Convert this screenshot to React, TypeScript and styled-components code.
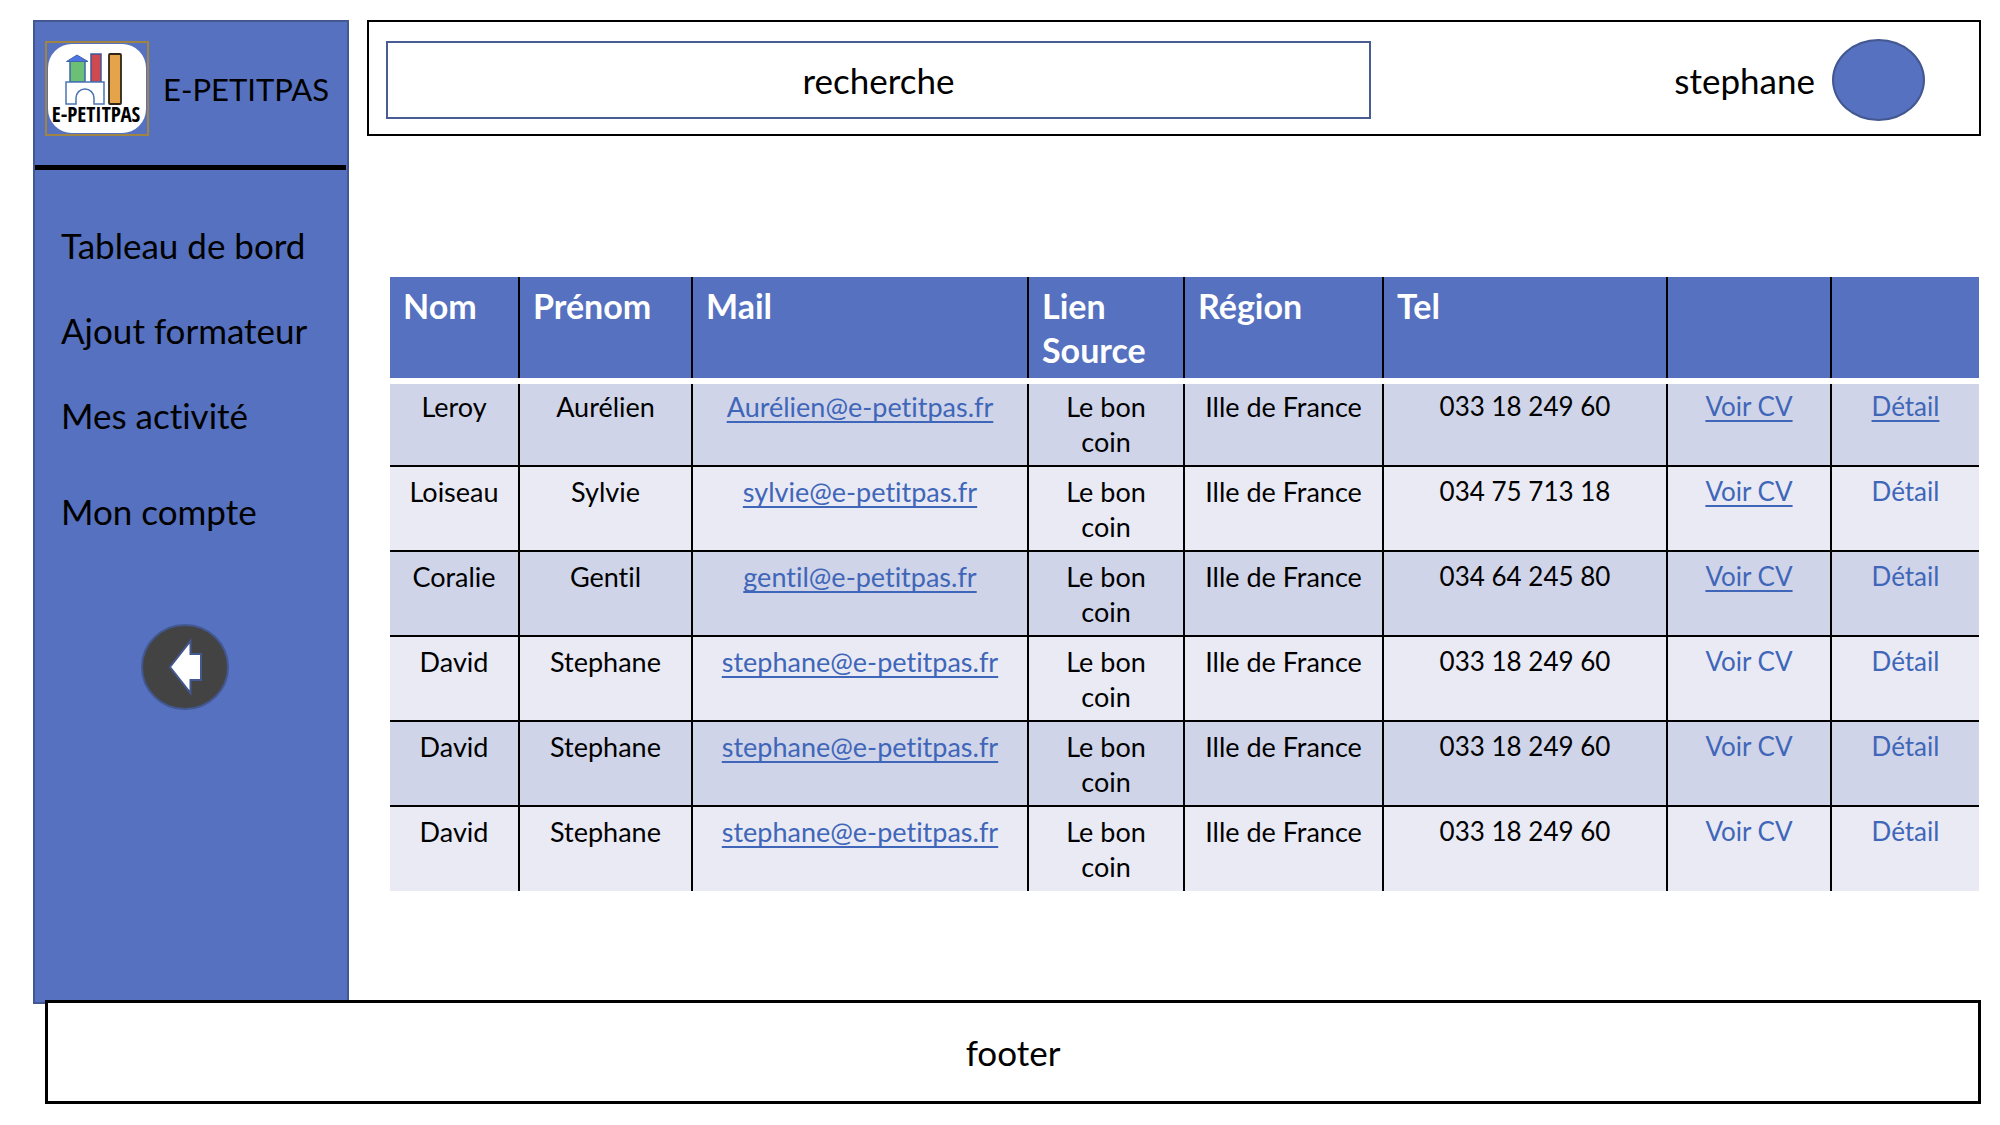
import React from "react";
import styled, { createGlobalStyle } from "styled-components";

const color = {
  blue: "#5571bf",
  outline: "#435790",
  searchLine: "#4a5c94",
  link: "#3f66b8",
  rowDark: "#cfd4e8",
  rowLight: "#e9eaf4",
};

const GlobalStyle = createGlobalStyle`
  *, *::before, *::after { box-sizing: border-box; }
  body {
    margin: 0;
    background: #fff;
    color: #000;
    font-family: Lato, Carlito, "Open Sans", sans-serif;
    font-size: 35px;
    font-variant-ligatures: none;
    line-height: 40px;
  }
`;

const Page = styled.div`
  display: flex;
  flex-direction: column;
  min-height: 100vh;
  padding: 20px 19px 21px 33px;
`;

const Body = styled.div`
  flex: 1;
  display: grid;
  grid-template-columns: 316px minmax(0, 1fr);
  gap: 18px;
`;

const Sidebar = styled.aside`
  background: ${color.blue};
  border: 2px solid ${color.outline};
`;

const Brand = styled.div`
  display: flex;
  align-items: center;
  gap: 14px;
  height: 148px;
  margin-right: 1px;
  padding: 0 0 10px 10px;
  border-bottom: 5px solid #000;
`;

const BrandName = styled.span`
  font-size: 31px;
`;

const Logo = styled.svg`
  flex: none;
  width: 104px;
  height: 95px;
`;

const Nav = styled.nav`
  display: flex;
  flex-direction: column;
  gap: 56px;
  padding: 55px 0 0 26px;
`;

const NavList = styled.ul`
  display: flex;
  flex-direction: column;
  gap: 45px;
  margin: 0;
  padding: 0;
  list-style: none;
`;

const NavLink = styled.a`
  color: inherit;
  text-decoration: none;
`;

const BackButton = styled.button`
  display: block;
  margin: 93px 0 0 106px;
  padding: 0;
  border: 0;
  background: none;
  cursor: pointer;

  svg {
    display: block;
    width: 88px;
    height: 86px;
  }
`;

const Main = styled.main`
  display: flex;
  flex-direction: column;
  gap: 141px;
`;

const TopBar = styled.header`
  display: grid;
  grid-template-columns: 16fr 9fr;
  align-items: center;
  padding: 17px 54px 13px 17px;
  border: 2px solid #000;
`;

const SearchBox = styled.input`
  width: 100%;
  height: 78px;
  border: 2px solid ${color.searchLine};
  border-radius: 0;
  background: #fff;
  font: inherit;
  text-align: center;

  &::placeholder {
    color: #000;
    opacity: 1;
  }
`;

const User = styled.div`
  display: flex;
  align-items: center;
  justify-content: flex-end;
  gap: 17px;
`;

const Avatar = styled.span`
  width: 93px;
  height: 82px;
  border: 2px solid ${color.outline};
  border-radius: 50%;
  background: ${color.blue};
`;

const TableArea = styled.div`
  padding: 0 2px 0 23px;
`;

const Table = styled.table`
  width: 100%;
  table-layout: fixed;
  border-collapse: collapse;
`;

const Column = styled.col<{ $width: number }>`
  width: ${(p) => p.$width}px;
`;

const HeadCell = styled.th`
  height: 104px;
  padding: 7px 13px 2px;
  border-bottom: 6px solid #fff;
  background: ${color.blue};
  color: #fff;
  font-size: 34px;
  font-weight: 700;
  line-height: 44px;
  text-align: left;
  vertical-align: top;

  & + & {
    border-left: 2px solid #000;
  }
`;

const Cell = styled.td<{ $compact?: boolean }>`
  padding: 7px 10px 0;
  font-size: ${(p) => (p.$compact ? 26 : 27)}px;
  line-height: 35px;
  text-align: center;
  vertical-align: top;

  & + & {
    border-left: 2px solid #000;
  }
`;

const Row = styled.tr`
  height: 85px;
  background: ${color.rowLight};

  &:nth-child(odd) {
    background: ${color.rowDark};
  }

  &:first-child ${Cell} {
    padding-top: 5px;
  }

  & + & {
    border-top: 2px solid #000;
  }
`;

const CellLink = styled.a<{ $plain?: boolean }>`
  color: ${color.link};
  text-decoration: ${(p) => (p.$plain ? "none" : "underline")};
  text-decoration-thickness: 2px;
  text-decoration-skip-ink: none;
  text-underline-offset: 4px;
  white-space: nowrap;
`;

const Footer = styled.footer`
  z-index: 1;
  display: flex;
  align-items: center;
  justify-content: center;
  height: 104px;
  margin: -4px 0 0 12px;
  border: 3px solid #000;
  background: #fff;
`;

const columns = [
  { label: "Nom", width: 129 },
  { label: "Prénom", width: 173 },
  { label: "Mail", width: 336 },
  { label: "Lien Source", width: 156 },
  { label: "Région", width: 199 },
  { label: "Tel", width: 284 },
  { label: "", width: 164 },
  { label: "", width: 148 },
];

interface Trainer {
  nom: string;
  prenom: string;
  mail: string;
  tel: string;
  cvLinked?: boolean;
  detailLinked?: boolean;
}

const david: Trainer = {
  nom: "David",
  prenom: "Stephane",
  mail: "stephane@e-petitpas.fr",
  tel: "033 18 249 60",
};

const trainers: Trainer[] = [
  { nom: "Leroy", prenom: "Aurélien", mail: "Aurélien@e-petitpas.fr", tel: "033 18 249 60", cvLinked: true, detailLinked: true },
  { nom: "Loiseau", prenom: "Sylvie", mail: "sylvie@e-petitpas.fr", tel: "034 75 713 18", cvLinked: true },
  { nom: "Coralie", prenom: "Gentil", mail: "gentil@e-petitpas.fr", tel: "034 64 245 80", cvLinked: true },
  david,
  david,
  david,
];

const navGroups = [["Tableau de bord", "Ajout formateur", "Mes activité"], ["Mon compte"]];

function BrandLogo() {
  return (
    <Logo viewBox="0 0 104 95" role="img" aria-label="Logo E-PETITPAS">
      <rect x="3" y="3" width="98" height="89" rx="24" fill="#fff" />
      <rect x="1" y="1" width="102" height="93" fill="none" stroke="#a08443" strokeWidth="2" />
      <rect x="25" y="20" width="15" height="21" fill="#6cc076" stroke="#3f67a8" strokeWidth="1.5" />
      <path d="M21.500 20.500L32 14L43 20.500Z" fill="#4f74e6" stroke="#3f67a8" strokeWidth="1" />
      <rect x="46" y="13" width="10" height="28" fill="#cf4a50" stroke="#3f5896" strokeWidth="1.500" />
      <rect x="64" y="13" width="12" height="50" rx="1" fill="#e5a34a" stroke="#2f2618" strokeWidth="1.800" />
      <path
        d="M21 41H59V63H49V57A9 9 0 0 0 31 57V63H21Z"
        fill="#fff"
        stroke="#4a74b4"
        strokeWidth="1.500"
      />
      <text
        x="51"
        y="81"
        textAnchor="middle"
        fontFamily="'Open Sans Condensed', 'Liberation Sans Narrow', 'Noto Sans', sans-serif"
        fontSize="21"
        fontWeight="700"
      >
        E-PETITPAS
      </text>
    </Logo>
  );
}

export default function App() {
  return (
    <>
      <GlobalStyle />
      <Page>
        <Body>
          <Sidebar>
            <Brand>
              <BrandLogo />
              <BrandName>E-PETITPAS</BrandName>
            </Brand>
            <Nav aria-label="Menu principal">
              {navGroups.map((group) => (
                <NavList key={group[0]}>
                  {group.map((label) => (
                    <li key={label}>
                      <NavLink href="#">{label}</NavLink>
                    </li>
                  ))}
                </NavList>
              ))}
            </Nav>
            <BackButton type="button" aria-label="Retour">
              <svg viewBox="0 0 88 86" aria-hidden="true">
                <ellipse cx="44" cy="43" rx="43" ry="42" fill="#434343" stroke={color.outline} strokeWidth="2" />
                <path d="M29 43L49.500 17V30H60V56H49.500V69Z" fill="#fff" stroke={color.outline} strokeWidth="2" />
              </svg>
            </BackButton>
          </Sidebar>
          <Main>
            <TopBar>
              <SearchBox type="text" placeholder="recherche" aria-label="recherche" />
              <User>
                <span>stephane</span>
                <Avatar />
              </User>
            </TopBar>
            <TableArea>
              <Table>
                <colgroup>
                  {columns.map((c, i) => (
                    <Column key={i} $width={c.width} />
                  ))}
                </colgroup>
                <thead>
                  <tr>
                    {columns.map((c, i) => (
                      <HeadCell key={i} scope="col">
                        {c.label}
                      </HeadCell>
                    ))}
                  </tr>
                </thead>
                <tbody>
                  {trainers.map((t, i) => (
                    <Row key={i}>
                      <Cell>{t.nom}</Cell>
                      <Cell>{t.prenom}</Cell>
                      <Cell>
                        <CellLink href={`mailto:${t.mail}`}>{t.mail}</CellLink>
                      </Cell>
                      <Cell>
                        Le bon
                        <br />
                        coin
                      </Cell>
                      <Cell>Ille de France</Cell>
                      <Cell $compact>{t.tel}</Cell>
                      <Cell $compact>
                        <CellLink href="#" $plain={!t.cvLinked}>
                          Voir CV
                        </CellLink>
                      </Cell>
                      <Cell $compact>
                        <CellLink href="#" $plain={!t.detailLinked}>
                          Détail
                        </CellLink>
                      </Cell>
                    </Row>
                  ))}
                </tbody>
              </Table>
            </TableArea>
          </Main>
        </Body>
        <Footer>footer</Footer>
      </Page>
    </>
  );
}
